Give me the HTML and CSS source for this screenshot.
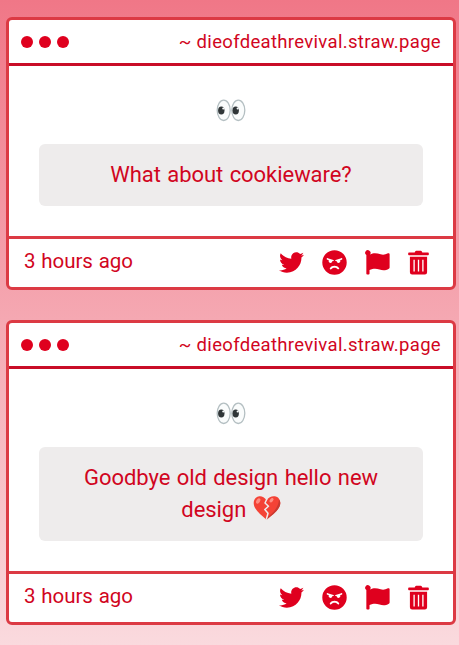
FILE: index.html
```html
<!DOCTYPE html>
<html lang="en">
<head>
    <meta charset="UTF-8">
    <meta name="viewport" content="width=device-width, initial-scale=1.0">
    <title>Inbox</title>
    <link rel="stylesheet" href="styles.css">
</head>
<body>

<!-- Shared icons -->
<svg class="sprite" aria-hidden="true">
    <defs>
        <symbol id="eyes" viewBox="0 0 30 26">
            <g fill="#fafcfc" stroke="#b4bfc2" stroke-width="1.3">
                <ellipse cx="7.7" cy="13.3" rx="6.5" ry="10.2"/>
                <ellipse cx="22.3" cy="13.3" rx="6.5" ry="10.2"/>
            </g>
            <g fill="#303638">
                <ellipse cx="5.3" cy="13.5" rx="3.2" ry="4"/>
                <ellipse cx="19.7" cy="13.5" rx="3.2" ry="4"/>
            </g>
            <g fill="#fafcfc">
                <circle cx="7.3" cy="11.5" r="1.1"/>
                <circle cx="21.7" cy="11.5" r="1.1"/>
            </g>
        </symbol>
        <symbol id="broken-heart" viewBox="0 0 28 26">
            <path fill="#f44336" d="M13.5 5.2C11.5 2.2 8.8 1 6.3 1.3 2.8 1.7.6 4.6.7 8.3.9 14.5 7.5 19.5 13.5 24.7 20 19.5 27 14.5 27.3 8.3 27.4 4.6 25.2 1.7 21.7 1.3 18.5 1 15.7 2.2 13.5 5.2z"/>
            <path fill="#c93a31" d="M27.3 8.3C27 14.5 20 19.5 13.5 24.7l-1-.9C18.5 19.5 25 14 26 4.8c.9 1 1.3 2.2 1.3 3.5z"/>
            <path fill="none" stroke="#eeecec" stroke-width="1.5" stroke-linejoin="round" d="M14 3.8l-2 4.2 3.5 3.3-3.7 3.2 3.2 3.7-1.8 6.5"/>
            <ellipse cx="5.2" cy="6" rx="1.8" ry="2.9" fill="#ff8d82" transform="rotate(32 5.2 6)"/>
            <ellipse cx="18.5" cy="5.2" rx="1.6" ry="2.5" fill="#ff8d82" transform="rotate(42 18.5 5.2)"/>
        </symbol>
        <symbol id="twitter" viewBox="0 0 512 512">
            <path d="M459.37 151.716c.325 4.548.325 9.097.325 13.645 0 138.72-105.583 298.558-298.558 298.558-59.452 0-114.68-17.219-161.137-47.106 8.447.974 16.568 1.299 25.34 1.299 49.055 0 94.213-16.568 130.274-44.832-46.132-.975-84.792-31.188-98.112-72.772 6.498.974 12.995 1.624 19.818 1.624 9.421 0 18.843-1.3 27.614-3.573-48.081-9.747-84.143-51.98-84.143-102.985v-1.299c13.969 7.797 30.214 12.67 47.431 13.319-28.264-18.843-46.781-51.005-46.781-87.391 0-19.492 5.197-37.36 14.294-52.954 51.655 63.675 129.3 105.258 216.365 109.807-1.624-7.797-2.599-15.918-2.599-24.04 0-57.828 46.782-104.934 104.934-104.934 30.213 0 57.502 12.67 76.67 33.137 23.715-4.548 46.456-13.32 66.599-25.34-7.798 24.366-24.366 44.833-46.132 57.827 21.117-2.273 41.584-8.122 60.426-16.243-14.292 20.791-32.161 39.308-52.628 54.253z"/>
        </symbol>
        <symbol id="angry" viewBox="0 0 26 26">
            <path fill-rule="evenodd" d="M13 .3a12.7 12.7 0 1 1 0 25.4 12.7 12.7 0 1 1 0-25.4zM5 8.9c-.4.6 0 1.1.6 1.3l1.5.5c-.6 1.3.3 2.7 1.7 2.7 1.2 0 2-.9 2-2l.7.1c.9.1 1.1-.9.3-1.2L6 8.5c-.5-.2-.8-.1-1 .4zM21 8.9c.4.6 0 1.1-.6 1.3l-1.5.5c.6 1.3-.3 2.7-1.7 2.7-1.2 0-2-.9-2-2l-.7.1c-.9.1-1.1-.9-.3-1.2L20 8.5c.5-.2.8-.1 1 .4zM13 16.5c-2 0-3.6.8-4.7 2.1-.8 1.1.7 2.2 1.6 1.2 1.6-1.8 4.6-1.8 6.2 0 .9 1 2.4-.1 1.6-1.2-1.1-1.3-2.7-2.1-4.7-2.1z"/>
        </symbol>
        <symbol id="flag" viewBox="0 0 26 26">
            <path d="M5.3 4.6c4-2.1 7.4-1.2 10.9-.1 2.7.8 5 .3 7.700-1 .9-.4 1.700.1 1.700 1v13.600c0 .6-.3 1.100-.8 1.400-3.100 1.900-6.300 2-9.700.9-3.600-1.200-6.500-1.200-10.400.5v3.500c0 .7-.5 1.200-1.200 1.200h-.9c-.7 0-1.200-.5-1.200-1.200V5.300A2.800 2.800 0 1 1 5.300 4.600z"/>
        </symbol>
        <symbol id="trash" viewBox="0 0 22 26">
            <path d="M1 2.6h6L7.5 1.4Q7.9.8 8.7.8h4.6q.8 0 1.2.6L15 2.6h6q.8 0 .8.8v1.200q0 .7-.8.7H1q-.8 0-.8-.7V3.400q0-.8.8-.8z"/>
            <path fill-rule="evenodd" d="M2 7h18v16.2q0 2.3-2.3 2.3H4.3Q2 25.5 2 23.2zM5.7 10v12.5h1.4V10zM10.3 10v12.5h1.4V10zM14.9 10v12.5h1.4V10z"/>
        </symbol>
    </defs>
</svg>

<div class="card">
    <div class="card-header">
        <div class="dots">
            <span class="dot"></span>
            <span class="dot"></span>
            <span class="dot"></span>
        </div>
        <span class="site">~ dieofdeathrevival.straw.page</span>
    </div>
    <div class="card-body">
        <svg class="eyes"><use href="#eyes"/></svg>
        <div class="message">What about cookieware?</div>
    </div>
    <div class="card-footer">
        <span class="time">3 hours ago</span>
        <div class="actions">
            <svg class="icon"><use href="#twitter"/></svg>
            <svg class="icon"><use href="#angry"/></svg>
            <svg class="icon"><use href="#flag"/></svg>
            <svg class="icon trash"><use href="#trash"/></svg>
        </div>
    </div>
</div>

<div class="card">
    <div class="card-header">
        <div class="dots">
            <span class="dot"></span>
            <span class="dot"></span>
            <span class="dot"></span>
        </div>
        <span class="site">~ dieofdeathrevival.straw.page</span>
    </div>
    <div class="card-body">
        <svg class="eyes"><use href="#eyes"/></svg>
        <div class="message">Goodbye old design hello new design <svg class="heart"><use href="#broken-heart"/></svg></div>
    </div>
    <div class="card-footer">
        <span class="time">3 hours ago</span>
        <div class="actions">
            <svg class="icon"><use href="#twitter"/></svg>
            <svg class="icon"><use href="#angry"/></svg>
            <svg class="icon"><use href="#flag"/></svg>
            <svg class="icon trash"><use href="#trash"/></svg>
        </div>
    </div>
</div>

</body>
</html>
```
FILE: styles.css
```css
* {
    box-sizing: border-box;
}

body {
    display: flex;
    flex-direction: column;
    gap: 30px;
    height: 645px;
    margin: 0;
    padding: 17px 3px 0 6px;
    overflow: hidden;
    background: linear-gradient(to bottom, #f07787, #fadade);
    font-family: Roboto, sans-serif;
    color: #d10521;
}

.sprite {
    position: absolute;
    width: 0;
    height: 0;
}

.card {
    background: white;
    border: 3px solid #dc3a44;
    border-radius: 6px;
}

.card-header {
    display: flex;
    justify-content: space-between;
    align-items: center;
    height: 46px;
    padding: 0 12px;
    border-bottom: 3px solid #c90d27;
}

.dots {
    display: flex;
    gap: 6px;
}

.dot {
    width: 12px;
    height: 12px;
    border-radius: 50%;
    background: #df001e;
}

.site {
    font-size: 18.5px;
    letter-spacing: 0.32px;
}

.card-body {
    display: flex;
    flex-direction: column;
    align-items: center;
    padding: 31px 30px 30px;
}

.eyes {
    width: 30px;
    height: 26px;
    margin-bottom: 21px;
}

.message {
    width: 100%;
    padding: 15px 30px;
    border-radius: 6px;
    background: #eeecec;
    font-size: 22px;
    line-height: 32px;
    letter-spacing: -0.05px;
    word-spacing: 1px;
    text-align: center;
}

.heart {
    width: 28px;
    height: 26px;
    vertical-align: -4px;
}

.card-footer {
    display: flex;
    justify-content: space-between;
    height: 51px;
    padding: 9px 24px 0 15px;
    border-top: 3px solid #dc3a44;
}

.time {
    font-size: 20.5px;
    line-height: 26px;
    letter-spacing: -0.05px;
    word-spacing: 0.8px;
}

.actions {
    display: flex;
    gap: 18px;
    padding-top: 2px;
}

.icon {
    width: 25px;
    height: 25px;
    fill: #df001e;
}

.trash {
    width: 21px;
}
```
